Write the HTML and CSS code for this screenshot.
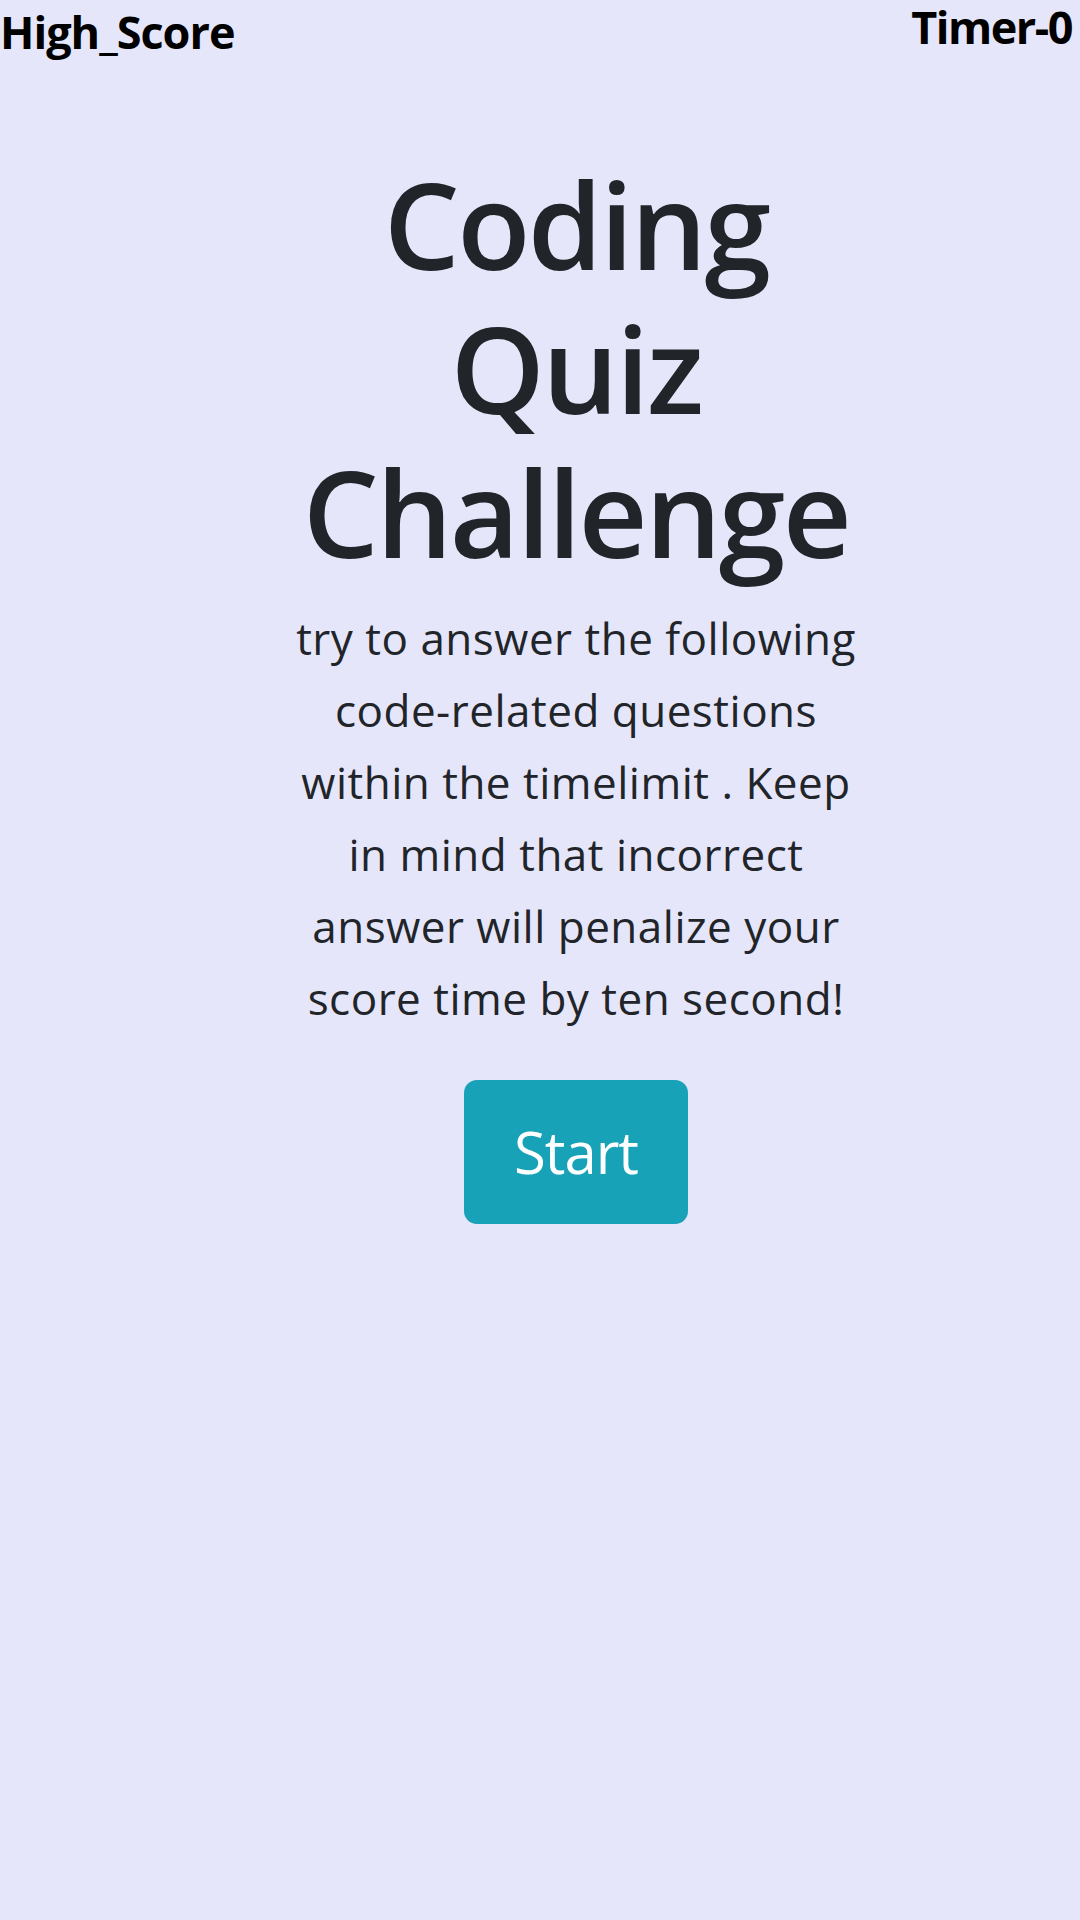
FILE: index.html
```html
<!DOCTYPE html>
<html lang="en">
<head>
<meta charset="utf-8">
<title>Coding Quiz Challenge</title>
<link rel="stylesheet" href="styles.css">
</head>
<body>
  <header class="topbar">
    <div class="high-score">High_Score</div>
    <div class="timer">Timer-0</div>
  </header>
  <main class="intro">
    <h1 class="title">Coding Quiz Challenge</h1>
    <p class="lead">try to answer the following code-related questions within the timelimit . Keep in mind that incorrect answer will penalize your score time by ten second!</p>
    <button class="start-btn" type="button">Start</button>
  </main>
</body>
</html>
```
FILE: styles.css
```css
html, body {
  margin: 0;
  padding: 0;
}

body {
  background: #e6e6fa;
  width: 1080px;
  min-height: 1920px;
  font-family: "Open Sans", "Noto Sans", sans-serif;
  color: #212529;
}

.topbar {
  display: flex;
  justify-content: space-between;
  align-items: flex-start;
  padding-right: 4px;
}

.high-score,
.timer {
  font-size: 45px;
  font-weight: 700;
  line-height: 50px;
  color: #000;
  letter-spacing: -1px;
}

.high-score {
  margin-top: 7px;
}

.timer {
  margin-top: 2px;
  padding: 0 4px 0 4px;
  letter-spacing: -1.5px;
}

.intro {
  display: flex;
  flex-direction: column;
  align-items: center;
  padding-left: 72px;
  padding-top: 95px;
}

.title {
  margin: 0;
  width: 600px;
  text-align: center;
  font-size: 120px;
  font-weight: 600;
  line-height: 144px;
  letter-spacing: -2.6px;
}

.lead {
  margin: 18px 0 0;
  width: 578px;
  text-align: center;
  font-size: 44px;
  font-weight: 400;
  line-height: 72px;
  letter-spacing: 0.5px;
}

.start-btn {
  margin-top: 46px;
  width: 224px;
  height: 144px;
  border: none;
  border-radius: 13px;
  background: #17a2b8;
  color: #fff;
  font-family: "Open Sans", "Noto Sans", sans-serif;
  font-size: 58px;
  line-height: 1;
  padding: 0;
  letter-spacing: -1px;
}
```
